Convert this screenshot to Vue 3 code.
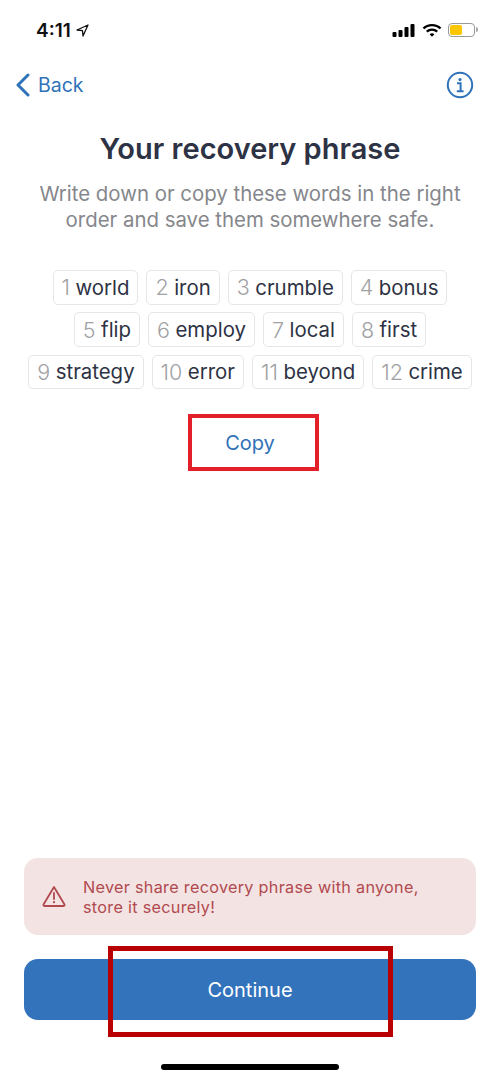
<script setup>
const words = ['world', 'iron', 'crumble', 'bonus', 'flip', 'employ', 'local', 'first', 'strategy', 'error', 'beyond', 'crime']
</script>

<template>
  <div class="screen">
    <div class="status">
      <div class="time">
        <span>4:11</span>
        <svg width="13" height="13" viewBox="0 0 13 13"><path d="M12 1 L1 6 L6.5 6.6 L7 12 Z" fill="none" stroke="#111" stroke-width="1.3" stroke-linejoin="round" /></svg>
      </div>
      <div class="status-icons">
        <svg width="24" height="15" viewBox="0 0 24 15">
          <rect x="0.5" y="9" width="4" height="5" rx="1" fill="#000" />
          <rect x="6.5" y="7" width="4" height="7" rx="1" fill="#000" />
          <rect x="12.5" y="4" width="4" height="10" rx="1" fill="#000" />
          <rect x="18.5" y="1" width="4" height="13" rx="1" fill="#000" />
        </svg>
        <svg width="20" height="15" viewBox="0 0 20 15">
          <path d="M1.5 5.5 C6 1 14 1 18.5 5.5" fill="none" stroke="#000" stroke-width="2.4" />
          <path d="M4.8 8.6 C7.6 6 12.4 6 15.2 8.6" fill="none" stroke="#000" stroke-width="2.4" />
          <path d="M7.6 11.2 L10 13.8 L12.4 11.2 C11 10 9 10 7.6 11.2 Z" fill="#000" />
        </svg>
        <div class="battery"><div class="battery-level"></div></div>
      </div>
    </div>

    <div class="nav">
      <button class="back">
        <svg width="16" height="24" viewBox="0 0 16 24"><path d="M13 2 L3 12 L13 22" fill="none" stroke="#2f72b8" stroke-width="3" stroke-linecap="round" stroke-linejoin="round" /></svg>
        <span>Back</span>
      </button>
      <svg width="28" height="28" viewBox="0 0 28 28">
        <circle cx="14" cy="14" r="12.2" fill="none" stroke="#2f72b8" stroke-width="2" />
        <circle cx="14" cy="8.6" r="1.6" fill="#2f72b8" />
        <path d="M11 12.2 H14.6 V20 M10.8 20.2 H17.6" fill="none" stroke="#2f72b8" stroke-width="2" />
      </svg>
    </div>

    <h1>Your recovery phrase</h1>
    <p class="sub">Write down or copy these words in the right order and save them somewhere safe.</p>

    <div class="words">
      <div v-for="(word, i) in words" :key="word" class="chip">
        <span class="num">{{ i + 1 }}</span> {{ word }}
      </div>
    </div>

    <button class="copy">Copy</button>

    <div class="bottom">
      <div class="alert">
        <svg width="24" height="23" viewBox="0 0 24 23">
          <path d="M12 2 L22.5 19.5 Q23 21 21.5 21 H2.5 Q1 21 1.5 19.5 Z" fill="none" stroke="#b04a4f" stroke-width="1.8" stroke-linejoin="round" />
          <path d="M12 8 V14" stroke="#b04a4f" stroke-width="1.8" stroke-linecap="round" />
          <circle cx="12" cy="17.2" r="1.1" fill="#b04a4f" />
        </svg>
        <p>Never share recovery phrase with anyone, store it securely!</p>
      </div>
      <button class="continue">Continue</button>
      <div class="highlight"></div>
    </div>

    <div class="home"></div>
  </div>
</template>

<style scoped>
.screen {
  width: 500px;
  height: 1080px;
  display: flex;
  flex-direction: column;
  align-items: center;
  background: #fff;
  font-family: Inter, "Noto Sans", sans-serif;
  position: relative;
}

.status {
  width: 100%;
  box-sizing: border-box;
  height: 60px;
  padding: 0 22px 0 36px;
  display: flex;
  justify-content: space-between;
  align-items: center;
}

.time {
  display: flex;
  align-items: center;
  gap: 5px;
  font-size: 19px;
  font-weight: 600;
  color: #111;
}

.status-icons {
  display: flex;
  align-items: center;
  gap: 6px;
  margin-right: 3px;
}

.battery {
  width: 27px;
  height: 14px;
  box-sizing: border-box;
  border: 1px solid #999;
  border-radius: 4px;
  padding: 1px;
  position: relative;
}

.battery::after {
  content: '';
  position: absolute;
  right: -4px;
  top: 3px;
  width: 2px;
  height: 5px;
  background: #aaa;
  border-radius: 0 2px 2px 0;
}

.battery-level {
  width: 12px;
  height: 100%;
  background: #fdc700;
  border-radius: 2px;
}

.nav {
  width: 100%;
  box-sizing: border-box;
  height: 50px;
  padding: 0 26px 0 15px;
  display: flex;
  justify-content: space-between;
  align-items: center;
}

.back {
  display: flex;
  align-items: center;
  gap: 7px;
  padding: 0;
  border: none;
  background: none;
  font: inherit;
  font-size: 19.5px;
  color: #2f72b8;
}

h1 {
  margin: 22px 0 0;
  font-size: 29px;
  line-height: 34px;
  font-weight: 600;
  color: #2d3244;
}

.sub {
  width: 440px;
  margin: 15px 0 0;
  font-size: 20.4px;
  line-height: 26px;
  text-align: center;
  color: #85878c;
}

.words {
  width: 452px;
  margin-top: 37px;
  display: flex;
  flex-wrap: wrap;
  justify-content: center;
  gap: 7.8px 8px;
}

.chip {
  height: 34.5px;
  box-sizing: border-box;
  padding: 0 8px;
  display: flex;
  align-items: center;
  gap: 5.5px;
  border: 1px solid #e6e6e8;
  border-radius: 5px;
  font-size: 20.4px;
  color: #2d3244;
}

.num {
  font-size: 21.5px;
  font-weight: 300;
  color: #a0a1a4;
}

.copy {
  width: 131px;
  height: 57px;
  margin: 25px 0 0 7px;
  padding: 0 11px 0 4px;
  border: 4px solid #e3202a;
  background: #fff;
  font: inherit;
  font-size: 20px;
  color: #2f72b8;
}

.bottom {
  width: 452px;
  margin-top: auto;
  position: relative;
}

.alert {
  height: 77px;
  box-sizing: border-box;
  padding: 0 18px;
  display: flex;
  align-items: center;
  gap: 17px;
  background: #f4e3e3;
  border-radius: 14px;
}

.alert p {
  max-width: 350px;
  margin: 0;
  font-size: 16.2px;
  line-height: 20px;
  letter-spacing: 0.3px;
  color: #b04a4f;
}

.continue {
  display: block;
  width: 100%;
  height: 61px;
  margin-top: 24px;
  border: none;
  border-radius: 14px;
  background: #3273bb;
  font: inherit;
  font-size: 20px;
  color: #fff;
}

.highlight {
  position: absolute;
  left: 84px;
  top: 88px;
  width: 285px;
  height: 91px;
  box-sizing: border-box;
  border: 5px solid #b80000;
}

.home {
  width: 178px;
  height: 6px;
  margin: 44px 0 10px;
  background: #000;
  border-radius: 3px;
}
</style>
